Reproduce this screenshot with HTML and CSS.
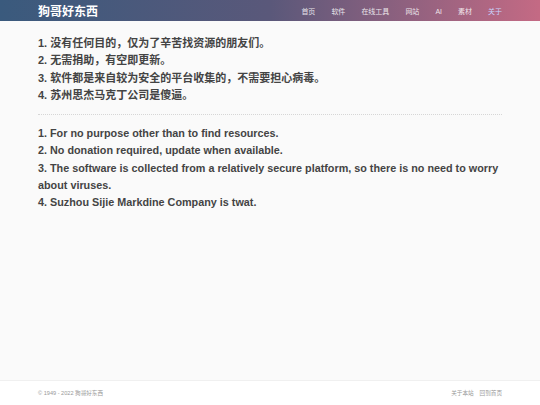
FILE: index.html
```html
<!DOCTYPE html>
<html lang="zh-CN">
<head>
<meta charset="utf-8">
<title>狗哥好东西</title>
<link rel="stylesheet" href="styles.css">
</head>
<body>
<header class="topbar">
  <div class="wrap topbar-inner">
    <div class="brand">狗哥好东西</div>
    <nav class="nav">
      <a href="#">首页</a>
      <a href="#">软件</a>
      <a href="#">在线工具</a>
      <a href="#">网站</a>
      <a href="#">AI</a>
      <a href="#">素材</a>
      <a href="#" class="active">关于</a>
    </nav>
  </div>
</header>
<main class="wrap main">
  <section class="block">
    <p>1. 没有任何目的，仅为了辛苦找资源的朋友们。</p>
    <p>2. 无需捐助，有空即更新。</p>
    <p>3. 软件都是来自较为安全的平台收集的，不需要担心病毒。</p>
    <p>4. 苏州思杰马克丁公司是傻逼。</p>
  </section>
  <hr class="sep">
  <section class="block en">
    <p>1. For no purpose other than to find resources.</p>
    <p>2. No donation required, update when available.</p>
    <p>3. The software is collected from a relatively secure platform, so there is no need to worry about viruses.</p>
    <p>4. Suzhou Sijie Markdine Company is twat.</p>
  </section>
</main>
<footer class="footer">
  <div class="wrap footer-inner">
    <span>© 1949 - 2022 狗哥好东西</span>
    <span class="links"><a href="#">关于本站</a><a href="#">回到首页</a></span>
  </div>
</footer>
</body>
</html>
```

FILE: styles.css
```css
* { box-sizing: border-box; }
html, body { height: 100%; }
body {
  margin: 0;
  background: #fafafa;
  font-family: "Liberation Sans", Arial, "Noto Sans CJK SC", sans-serif;
  color: #444;
  display: flex;
  flex-direction: column;
}
a { text-decoration: none; color: inherit; }
.wrap { width: 464px; margin: 0 auto; }
.topbar {
  height: 21px;
  background: linear-gradient(90deg, #3a5a7d 0%, #5a587a 50%, #c46a84 100%);
}
.topbar-inner {
  height: 100%;
  display: flex;
  align-items: center;
  justify-content: space-between;
}
.brand {
  color: #fff;
  font-weight: bold;
  font-size: 12px;
}
.nav { display: flex; align-items: center; gap: 16px; font-size: 7px; padding-top: 1px; }
.nav a { color: rgba(255,255,255,0.85); }
.nav a.active { color: #c9d4ff; }
.main { flex: 1; padding-top: 14px; }
.block p {
  margin: 0;
  font-size: 11px;
  font-weight: bold;
  line-height: 17.3px;
}
.block.en p { font-size: 10.8px; }
.sep {
  border: 0;
  border-top: 1px dotted #d6d6d6;
  margin: 10px 0 10px;
}
.footer {
  height: 25px;
  background: #fff;
  border-top: 1px solid #f0f0f0;
}
.footer-inner {
  height: 100%;
  display: flex;
  align-items: center;
  justify-content: space-between;
  font-size: 5.6px;
  color: #999;
}
.links { display: flex; gap: 6px; }
```
